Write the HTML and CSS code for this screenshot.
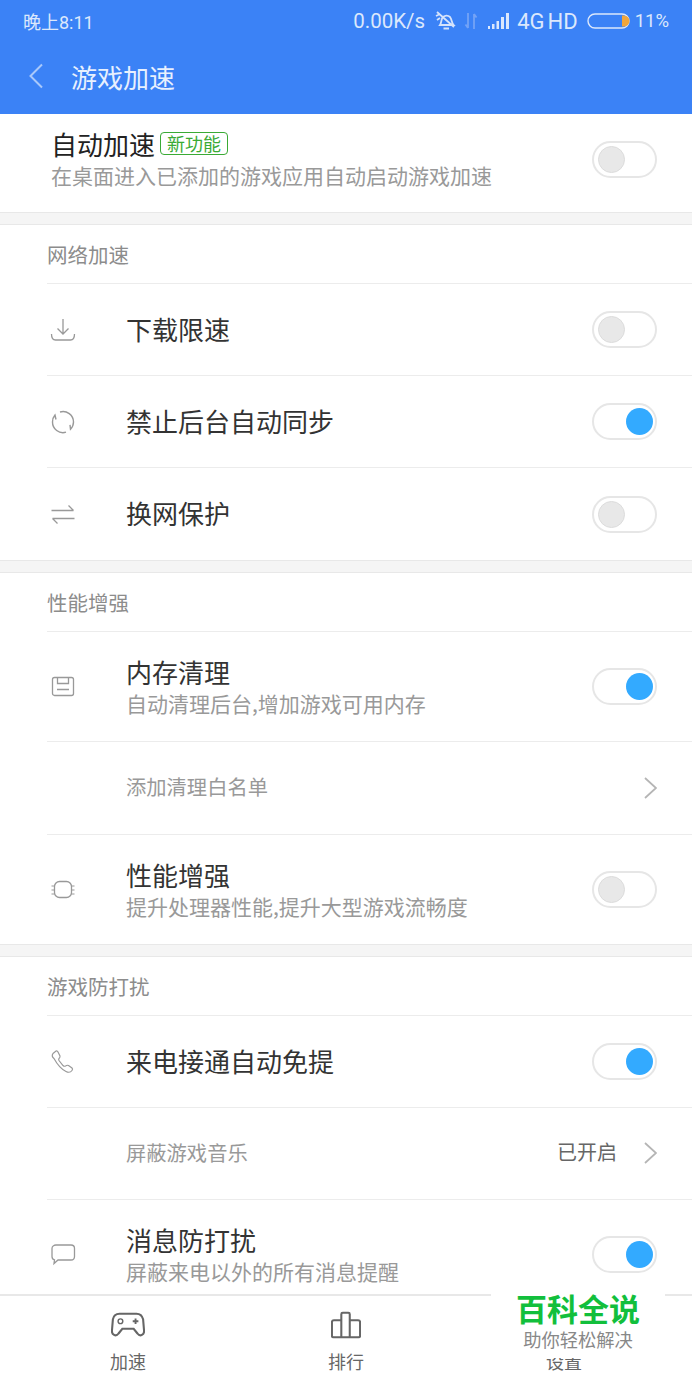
FILE: index.html
```html
<!DOCTYPE html>
<html lang="zh">
<head>
    <meta charset="utf-8">
    <title>游戏加速</title>
    <link rel="stylesheet" href="styles.css">
</head>
<body>
<div class="screen">
    <div class="top">
        <div class="status">
            <span class="status__time">晚上8:11</span>
            <div class="status__right">
                <span>0.00K/s</span>
                <svg class="status__bell" width="23" height="22" viewBox="0 0 23 22"><path d="M6 15c1.500-2 1-5 2.500-7.500 2-2.500 5.500-2.500 7.500-.5 2 2.500 1.500 6 3.500 8zM9.500 18.500h5.500M2 6l4-2M3 10l3-2M3 2l17 15" fill="none" stroke="#d5e3fb" stroke-width="1.800"/></svg>
                <svg class="status__data" width="14" height="20" viewBox="0 0 14 20"><path d="M4 2v15M4 17l-2.500-3.500M10 18V3M10 3l2.500 3.500" fill="none" stroke="#74a3f6" stroke-width="1.800"/></svg>
                <svg class="status__signal" width="22" height="16" viewBox="0 0 22 16"><path d="M0 13h2v3H0zM4 11h2.500v5H4zM8.500 8H11v8H8.500zM13 4h3v12h-3zM18 0h3v16h-3z" fill="#dce8fc"/></svg>
                <span class="status__net">4G</span>
                <span class="status__net status__net--hd">HD</span>
                <svg class="status__battery" width="44" height="16" viewBox="0 0 44 16"><rect x="1" y="1" width="41" height="14" rx="7" fill="none" stroke="#dce8fc" stroke-width="1.400"/><path d="M35 2.500h2a5.500 5.500 0 0 1 0 11h-2z" fill="#f0a63c"/></svg>
                <span class="status__pct">11%</span>
            </div>
        </div>
        <div class="titlebar">
            <svg width="16" height="26" viewBox="0 0 16 26"><path d="M14 1.500 2.500 13 14 24.500" fill="none" stroke="#a9c8fa" stroke-width="2"/></svg>
            <h1 class="titlebar__name">游戏加速</h1>
        </div>
    </div>

    <div class="content">
        <div class="group group--auto">
            <div class="auto__text">
                <div class="auto__title">自动加速<span class="tag">新功能</span></div>
                <div class="row__sub">在桌面进入已添加的游戏应用自动启动游戏加速</div>
            </div>
            <span class="switch"></span>
        </div>

        <div class="group">
            <div class="group__name">网络加速</div>
            <div class="row">
                <svg class="row__icon" viewBox="0 0 26 26"><path d="M13 2v15M7.500 11.500 13 17l5.500-5.500M1.500 17c0 4 1 6 4 6h15c3 0 4-2 4-6" fill="none" stroke="#999" stroke-width="1.300"/></svg>
                <div class="row__title">下载限速</div>
                <span class="switch"></span>
            </div>
            <div class="row">
                <svg class="row__icon" viewBox="0 0 26 26"><path d="M10 3a10.500 10.500 0 0 1 13.500 10 10.500 10.500 0 0 1-3 7.300l-.5-4.500M16 23.200A10.500 10.500 0 0 1 2.500 13 10.500 10.500 0 0 1 5 6l1 4.500" fill="none" stroke="#999" stroke-width="1.400"/></svg>
                <div class="row__title">禁止后台自动同步</div>
                <span class="switch switch--on"></span>
            </div>
            <div class="row row--end">
                <svg class="row__icon" viewBox="0 0 26 26"><path d="M1.500 9.500h22M18.500 4.500l5 5M24.500 17.500h-22M7.500 22.500l-5-5" fill="none" stroke="#999" stroke-width="1.300"/></svg>
                <div class="row__title">换网保护</div>
                <span class="switch"></span>
            </div>
        </div>

        <div class="group">
            <div class="group__name">性能增强</div>
            <div class="row row--tall">
                <svg class="row__icon" viewBox="0 0 26 26"><rect x="2.500" y="3.500" width="21" height="18" rx="2" fill="none" stroke="#999" stroke-width="1.300"/><path d="M7.500 3.500v6h11v-6M7 15.500h12" fill="none" stroke="#999" stroke-width="1.300"/></svg>
                <div class="row__text">
                    <div class="row__title">内存清理</div>
                    <div class="row__sub">自动清理后台,增加游戏可用内存</div>
                </div>
                <span class="switch switch--on"></span>
            </div>
            <div class="row row--link row--end">
                <div class="row__label">添加清理白名单</div>
                <svg class="chevron" width="13" height="22" viewBox="0 0 13 22"><path d="M1 1l11 10L1 21" fill="none" stroke="#b5b5b5" stroke-width="1.800"/></svg>
            </div>
            <div class="row row--tall">
                <svg class="row__icon" viewBox="0 0 26 26"><rect x="4.500" y="4.500" width="17" height="16" rx="5" fill="none" stroke="#999" stroke-width="1.300"/><path d="M1.500 9h3M1.500 13h3M1.500 17h3M21.500 9h3M21.500 13h3M21.500 17h3" fill="none" stroke="#999" stroke-width="1.200"/></svg>
                <div class="row__text">
                    <div class="row__title">性能增强</div>
                    <div class="row__sub">提升处理器性能,提升大型游戏流畅度</div>
                </div>
                <span class="switch"></span>
            </div>
        </div>

        <div class="group">
            <div class="group__name">游戏防打扰</div>
            <div class="row">
                <svg class="row__icon" viewBox="0 0 26 26"><path d="M3 4.500 6 2c1-.500 1.500 0 2 1l2 4c.3 1 0 1.500-1 2.500-.500.500-.500 1 0 2l4 5c1 1 1.500 1 2.500.500 1.500-1 2-1 3-.500l3.500 2.500c1 1 .8 1.500 0 2.500-1.500 2-3 2.500-6 1-5-2.500-9-7.500-12-13C2 8 2 6 3 4.500z" fill="none" stroke="#999" stroke-width="1.200"/></svg>
                <div class="row__title">来电接通自动免提</div>
                <span class="switch switch--on"></span>
            </div>
            <div class="row row--link">
                <div class="row__label">屏蔽游戏音乐</div>
                <span class="row__value">已开启</span>
                <svg class="chevron" width="13" height="22" viewBox="0 0 13 22"><path d="M1 1l11 10L1 21" fill="none" stroke="#b5b5b5" stroke-width="1.800"/></svg>
            </div>
            <div class="row row--tall">
                <svg class="row__icon" viewBox="0 0 26 26"><path d="M6 3h15c2 0 3.500 1.500 3.500 3.500v8c0 2-1.500 3.500-3.500 3.500H8l-4 3.500.5-3.700C3 17.500 2 16.500 2 14.500v-8C2 4.500 4 3 6 3z" fill="none" stroke="#999" stroke-width="1.300"/></svg>
                <div class="row__text">
                    <div class="row__title">消息防打扰</div>
                    <div class="row__sub">屏蔽来电以外的所有消息提醒</div>
                </div>
                <span class="switch switch--on"></span>
            </div>
        </div>
    </div>

    <div class="tabs">
        <div class="tab">
            <svg width="34" height="28" viewBox="0 0 36 28"><path d="M9 2h18c4 0 6 2 7 6l1 12c.3 4-4 7-7 3l-4-5H12l-4 5c-3 4-7.300 1-7-3L2 8c.7-4 3-6 7-6z" fill="none" stroke="#666" stroke-width="2.200"/><circle cx="10" cy="10" r="2.500" fill="none" stroke="#666" stroke-width="1.500"/><path d="M26 7v6M23 10h6" stroke="#666" stroke-width="2"/></svg>
            <span class="tab__name">加速</span>
        </div>
        <div class="tab">
            <svg width="30" height="28" viewBox="0 0 32 28"><path d="M11 27V2.500c0-.8.700-1.500 1.500-1.500h6c.8 0 1.500.7 1.500 1.500V27M11 9H3c-1 0-2 1-2 2v14.500c0 1 .7 1.500 1.500 1.500h27c.8 0 1.500-.5 1.500-1.500V11c0-1-1-2-2-2h-9" fill="none" stroke="#666" stroke-width="2.200"/></svg>
            <span class="tab__name">排行</span>
        </div>
        <div class="tab">
            <svg width="30" height="28" viewBox="0 0 32 28"></svg>
            <span class="tab__name">设置</span>
        </div>
    </div>

    <div class="mark">
        <div class="mark__name">百科全说</div>
        <div class="mark__sub">助你轻松解决</div>
    </div>
</div>
</body>
</html>
```

FILE: styles.css
```css
body {
    margin: 0;
    padding: 0;
    background: #fff;
}
.screen {
    color: #333;
    display: flex;
    flex-direction: column;
    font-family: "Noto Sans CJK SC", "Liberation Sans", sans-serif;
    height: 1384px;
    overflow: hidden;
    position: relative;
    width: 692px;
}

.top {
    background: #3b82f6;
    color: #dce8fc;
    flex: none;
    height: 114px;
}
.status {
    align-items: center;
    display: flex;
    font-family: "Roboto", "Noto Sans CJK SC", sans-serif;
    font-size: 20.500px;
    height: 42px;
    justify-content: space-between;
    padding: 0 23px;
}
.status__time {
    font-size: 18px;
}
.status__right {
    align-items: center;
    display: flex;
    gap: 7px;
}
.status__bell {
    margin-left: 2px;
}
.status__signal {
    margin-left: 3px;
}
.status__net {
    font-size: 22px;
}
.status__net--hd {
    margin-left: -4px;
}
.status__battery {
    margin-left: 2px;
}
.status__pct {
    font-size: 18.500px;
    margin-left: -3px;
}

.titlebar {
    align-items: center;
    display: flex;
    gap: 27px;
    height: 68px;
    padding-left: 28px;
}
.titlebar__name {
    color: #e8f0fe;
    font-size: 26px;
    font-weight: 400;
    margin: 0;
}

.content {
    background: #f5f5f5;
    flex: 1;
    min-height: 0;
    overflow: hidden;
}
.group {
    background: #fff;
    border-bottom: 1px solid #e8e8e8;
    border-top: 1px solid #e8e8e8;
    margin-bottom: 11px;
    padding-left: 47px;
}
.group--auto {
    align-items: center;
    border-top: 0;
    box-sizing: border-box;
    display: flex;
    height: 99px;
    justify-content: space-between;
    padding-bottom: 8px;
    padding-left: 51px;
    padding-right: 35px;
}
.auto__text {
    margin-bottom: 2px;
}
.group__name {
    color: #8c8c8c;
    font-size: 20.500px;
    height: 58px;
    line-height: 59px;
}

.auto__title {
    align-items: center;
    color: #222;
    display: flex;
    font-size: 26px;
    line-height: 34px;
}
.tag {
    border: 1px solid #3aaa35;
    border-radius: 4px;
    color: #3aaa35;
    font-size: 18px;
    line-height: 21px;
    margin-left: 5px;
    padding: 0 6px;
}

.row {
    align-items: center;
    border-top: 1px solid #ececec;
    box-sizing: border-box;
    display: flex;
    height: 92px;
    padding-right: 35px;
}
.row--tall {
    height: 110px;
}
.row--link {
    padding-left: 79px;
}
.row--end {
    height: 93px;
}
.row__icon {
    flex: none;
    height: 26px;
    margin: 0 50px 0 3px;
    width: 26px;
}
.row__text {
    flex: 1;
}
.row__title {
    flex: 1;
    font-size: 26px;
    line-height: 34px;
}
.row > .row__title {
    padding-bottom: 2px;
}
.row__sub {
    color: #999;
    font-size: 21px;
    line-height: 29px;
}
.row__label {
    color: #999;
    flex: 1;
    font-size: 20.300px;
    padding-bottom: 4px;
}
.row__value {
    color: #666;
    font-size: 20px;
    margin-right: 27px;
    padding-bottom: 4px;
}

.chevron {
    flex: none;
    margin-bottom: 1px;
}

.switch {
    background: #fff;
    border: 2px solid #e6e6e6;
    border-radius: 19px;
    box-sizing: border-box;
    display: block;
    flex: none;
    height: 37px;
    padding: 3px 4px 0;
    width: 65px;
}
.switch:after {
    background: #e8e8e8;
    border: 1px solid #dcdcdc;
    border-radius: 50%;
    box-sizing: border-box;
    content: "";
    display: block;
    height: 27px;
    width: 27px;
}
.switch--on:after {
    background: #33aaff;
    border: 0;
    margin-left: 28px;
}

.tabs {
    background: #fff;
    border-top: 2px solid #e8e8e8;
    box-sizing: border-box;
    display: flex;
    flex: none;
    height: 90px;
    padding: 15px 19px 0;
}
.tab {
    align-items: center;
    display: flex;
    flex: 1;
    flex-direction: column;
    gap: 10px;
}
.tab__name {
    color: #666;
    font-size: 18px;
    line-height: 24px;
}

/* watermark sits over the last tab */
.mark {
    background: #fff;
    bottom: 26px;
    box-sizing: border-box;
    height: 70px;
    left: 491px;
    padding-top: 1px;
    position: absolute;
    text-align: center;
    width: 174px;
}
.mark__name {
    color: #12bf3c;
    font-size: 31px;
    font-weight: 700;
    line-height: 38px;
}
.mark__sub {
    color: #888;
    font-size: 18.300px;
    line-height: 24px;
}
```
